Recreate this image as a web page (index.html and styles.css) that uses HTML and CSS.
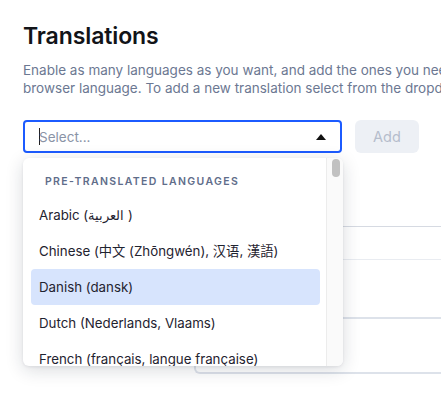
FILE: index.html
```
<!DOCTYPE html>
<html lang="en">
<head>
<meta charset="utf-8">
<title>Translations</title>
<link rel="stylesheet" href="styles.css">
</head>
<body>
<main class="page">
  <h1 class="title">Translations</h1>
  <p class="intro">
    <span class="line">Enable as many languages as you want, and add the ones you need for your users' own</span>
    <span class="line">browser language. To add a new translation select from the dropdown below.</span>
  </p>
  <div class="controls">
    <div class="select-wrap">
      <div class="select">
        <span class="cursor"></span>
        <span class="placeholder">Select...</span>
        <span class="caret"></span>
      </div>
      <div class="menu">
        <div class="menu-list">
          <div class="menu-header">PRE-TRANSLATED LANGUAGES</div>
          <div class="option">Arabic (<span dir="rtl" lang="ar">العربية</span> )</div>
          <div class="option">Chinese (中文 (Zhōngwén), 汉语, 漢語)</div>
          <div class="option active">Danish (dansk)</div>
          <div class="option">Dutch (Nederlands, Vlaams)</div>
          <div class="option">French (français, langue française)</div>
        </div>
        <div class="menu-scroll"><div class="menu-thumb"></div></div>
      </div>
    </div>
    <button class="add-btn" type="button" disabled>Add</button>
  </div>
  <div class="table">
    <div class="row row-head"></div>
    <div class="row row-1"></div>
    <div class="row row-2"></div>
    <div class="box"></div>
  </div>
</main>
</body>
</html>
```
FILE: styles.css
```
html, body {
  margin: 0;
  padding: 0;
  background: #ffffff;
  overflow: hidden;
  width: 441px;
  height: 393px;
}
body {
  font-family: Inter, "Noto Sans", "Noto Sans CJK SC", sans-serif;
  color: #1f2330;
}
.page {
  padding: 20px 0 0 23px;
  width: 800px;
}
.title {
  margin: 0;
  font-size: 23px;
  line-height: 32px;
  font-weight: 600;
  color: #121418;
  letter-spacing: -0.1px;
}
.intro {
  margin: 9px 0 0 0;
  font-size: 13.5px;
  line-height: 18px;
  color: #6c7892;
}
.line {
  display: block;
  white-space: nowrap;
}
.controls {
  margin-top: 23px;
  display: flex;
  align-items: flex-start;
  gap: 13px;
}
.select-wrap {
  position: relative;
  width: 319px;
}
.select {
  box-sizing: border-box;
  height: 33px;
  border: 2px solid #1c5bff;
  border-radius: 4px;
  display: flex;
  align-items: center;
  padding: 0 14px 0 14px;
  position: relative;
}
.cursor {
  width: 1px;
  height: 17px;
  background: #222;
  margin-right: -1px;
}
.placeholder {
  flex: 1;
  font-size: 13.5px;
  color: #8a93a6;
}
.caret {
  width: 0;
  height: 0;
  border-left: 5px solid transparent;
  border-right: 5px solid transparent;
  border-bottom: 6px solid #111;
}
.add-btn {
  width: 64px;
  height: 33px;
  border: none;
  border-radius: 6px;
  background: #edf0f5;
  color: #b5bdcc;
  font-family: Inter, "Noto Sans", sans-serif;
  font-size: 14.5px;
  padding: 0;
}
.menu {
  position: absolute;
  top: 38px;
  left: 0;
  width: 320px;
  height: 208px;
  background: #ffffff;
  border-radius: 6px;
  box-shadow: 0 4px 18px rgba(20, 30, 50, 0.16), 0 1px 3px rgba(20, 30, 50, 0.08);
  display: flex;
  overflow: hidden;
  z-index: 2;
}
.menu-list {
  flex: 1;
  padding: 0 6px 0 8px;
  overflow: hidden;
}
.menu-header {
  padding: 16px 0 7px 14px;
  font-size: 10.5px;
  line-height: 16px;
  font-weight: 600;
  letter-spacing: 1.35px;
  color: #5f6d8a;
}
.option {
  height: 36px;
  line-height: 36px;
  padding-left: 8px;
  border-radius: 4px;
  font-size: 13.3px;
  color: #1f2330;
  white-space: nowrap;
}
.option.active {
  background: #d7e4fd;
}
.menu-scroll {
  width: 16px;
  border-left: 1px solid #ececec;
  background: #fafafa;
}
.menu-thumb {
  margin: 1px 0 0 5px;
  width: 8px;
  height: 18px;
  border-radius: 4px;
  background: #c1c1c1;
}
.row {
  border-bottom: 1px solid #e9ecf1;
}
.row-head {
  height: 73px;
  border-bottom-color: #d6dae2;
}
.row-1 {
  height: 32px;
}
.row-2 {
  height: 57px;
  border-bottom: 2px solid #dde2ea;
}
.box {
  margin-left: 171px;
  height: 53px;
  border-left: 2px solid #dde2ea;
  border-bottom: 2px solid #dde2ea;
  border-bottom-left-radius: 6px;
}
```
